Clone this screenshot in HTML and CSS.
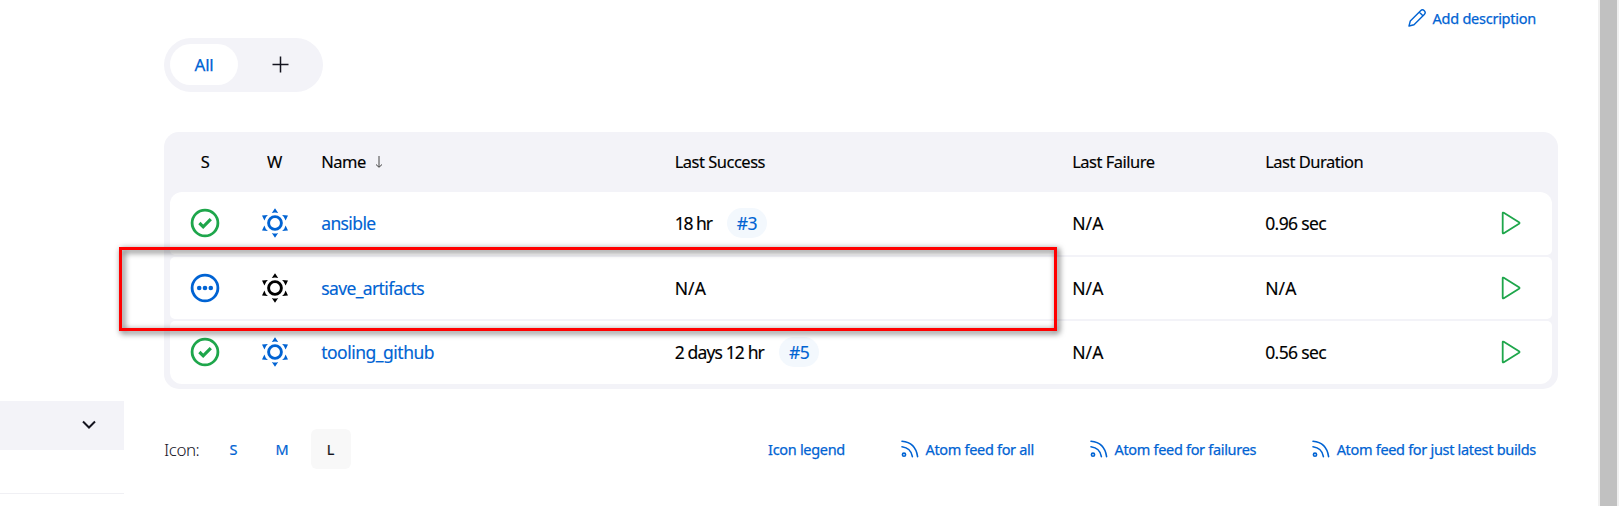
FILE: index.html
```html
<!DOCTYPE html>
<html lang="en">
<head>
<meta charset="utf-8">
<title>Dashboard</title>
<link rel="stylesheet" href="styles.css">
</head>
<body>
<svg class="defs" aria-hidden="true">
  <symbol id="ok" viewBox="0 0 30 30"><circle cx="15" cy="15" r="12.9" fill="none" stroke="currentColor" stroke-width="2.8"/><path d="M9.4 15l3.8 3.8 7.6-7.6" fill="none" stroke="currentColor" stroke-width="3.2"/></symbol>
  <symbol id="pending" viewBox="0 0 30 30"><circle cx="15" cy="15" r="12.9" fill="none" stroke="currentColor" stroke-width="2.8"/><g fill="currentColor"><circle cx="9.2" cy="15" r="2.3"/><circle cx="15" cy="15" r="2.3"/><circle cx="20.8" cy="15" r="2.3"/></g></symbol>
  <symbol id="sun" viewBox="0 0 30 30"><circle cx="15" cy="15" r="6.4" fill="none" stroke="currentColor" stroke-width="2.9"/><g fill="currentColor"><path d="M15 .2l3.2 4.8q-3.2-1.1-6.4 0z"/><path d="M15 29.8l3.2-4.8q-3.2 1.1-6.4 0z"/><path d="M2 7.4l5.9-.4q-2.7 2.2-3.5 5.6z"/><path d="M28 7.4l-5.9-.4q2.7 2.2 3.5 5.6z"/><path d="M2 22.6l5.9.4q-2.7-2.2-3.5-5.6z"/><path d="M28 22.6l-5.9.4q2.7-2.2 3.5-5.6z"/></g></symbol>
  <symbol id="play" viewBox="0 0 20 24"><path d="M1.7 2.4v19.2q0 1.2 1.1.7L18 12.8q1.1-.8 0-1.6L2.8 1.7q-1.1-.5-1.1.7z" fill="none" stroke="currentColor" stroke-width="1.8" stroke-linejoin="round"/></symbol>
  <symbol id="feed" viewBox="0 0 18 18"><g fill="none" stroke="currentColor" stroke-width="1.6" stroke-linecap="round"><circle cx="3" cy="14.7" r="1.6"/><path d="M1 6.8q9 1.2 10.4 9.8M1 1.3Q14.5 2.5 16.6 16.6"/></g></symbol>
</svg>
<div class="page">
  <aside class="side"><div class="side-head"><svg width="16" height="10" viewBox="0 0 16 10"><path d="M2 1.5l6 6 6-6" fill="none" stroke="#14141f" stroke-width="2"/></svg></div><div class="side-line"></div></aside>
  <main class="main">
    <div class="top"><a class="link add"><svg viewBox="0 0 18 18"><path d="M1 17l1.3-5L12.6 1.7a2.55 2.55 0 0 1 3.7 3.7L6 15.7zM11.2 3.1l3.7 3.7" fill="none" stroke="currentColor" stroke-width="1.4" stroke-linejoin="round"/></svg><span>Add description</span></a></div>
    <nav class="tabs"><a class="tab">All</a><a class="plus"><svg width="17" height="17" viewBox="0 0 17 17"><path d="M8.5.5v16M.5 8.5h16" stroke="#14141f" stroke-width="1.5"/></svg></a></nav>
    <section class="table">
      <div class="row head"><span class="c">S</span><span class="c">W</span><span>Name <svg class="arrow" viewBox="0 0 8 12"><path d="M4 0v11M1 8.5l3 2.8 3-2.8" fill="none" stroke="#444" stroke-width="1"/></svg></span><span>Last Success</span><span>Last Failure</span><span>Last Duration</span></div>
      <div class="row first"><span class="c green"><svg class="i"><use href="#ok"/></svg></span><span class="c blue"><svg class="i"><use href="#sun"/></svg></span><a class="blue">ansible</a><span class="hours">18 hr<b class="badge">#3</b></span><span class="na">N/A</span><span>0.96 sec</span><span class="green run"><svg><use href="#play"/></svg></span></div>
      <div class="row"><span class="c blue"><svg class="i"><use href="#pending"/></svg></span><span class="c"><svg class="i"><use href="#sun"/></svg></span><a class="blue">save_artifacts</a><span class="na">N/A</span><span class="na">N/A</span><span class="na">N/A</span><span class="green run"><svg><use href="#play"/></svg></span></div>
      <div class="row last"><span class="c green"><svg class="i"><use href="#ok"/></svg></span><span class="c blue"><svg class="i"><use href="#sun"/></svg></span><a class="blue wide">tooling_github</a><span class="days">2 days 12 hr<b class="badge">#5</b></span><span class="na">N/A</span><span>0.56 sec</span><span class="green run"><svg><use href="#play"/></svg></span></div>
    </section>
    <footer class="foot">
      <div class="sizes"><span class="lbl">Icon:</span><a>S</a><a>M</a><a class="on">L</a></div>
      <div class="feeds"><a class="link"><span>Icon legend</span></a><a class="link"><svg><use href="#feed"/></svg><span>Atom feed for all</span></a><a class="link"><svg><use href="#feed"/></svg><span>Atom feed for failures</span></a><a class="link"><svg><use href="#feed"/></svg><span>Atom feed for just latest builds</span></a></div>
    </footer>
  </main>
  <div class="scroll"></div>
</div>
<div class="mark"></div>
</body>
</html>
```
FILE: styles.css
```css
* { box-sizing: border-box; }
body { margin: 0; background: #fff; color: #14141f; font-family: "Noto Sans", sans-serif; overflow: hidden; }
.defs { position: absolute; width: 0; height: 0; }
.page { display: flex; height: 506px; }
.side { width: 124px; padding-top: 401px; flex: none; }
.side-head { height: 49px; background: #f3f3f8; display: flex; align-items: center; justify-content: flex-end; padding: 0 27px 1px 0; }
.side-line { margin-top: 43px; height: 1px; background: #f0f0f4; }
.main { width: 1394px; margin-left: 40px; flex: none; }
.scroll { width: 21px; margin-left: auto; background: #c1c1c1; border: solid #f0f0f0; border-width: 0 2px; }
.link { display: flex; align-items: center; color: #0063d3; font-size: 14.5px; line-height: 20px; white-space: nowrap; -webkit-text-stroke: .25px; }
.link span { letter-spacing: -.31px; }
.link.add span { letter-spacing: -.25px; }
.link svg { width: 18px; height: 18px; margin-right: 6.5px; flex: none; }
.top { height: 38px; padding: 8px 22px 0 0; display: flex; justify-content: flex-end; align-items: flex-start; }
.tabs { width: 159px; height: 54px; padding: 6px; border-radius: 27px; background: #f3f3f8; display: flex; }
.tab { flex: none; width: 68px; height: 41px; border-radius: 21px; background: #fff; color: #0063d3; font-size: 17px; line-height: 41px; text-align: center; letter-spacing: -.2px; -webkit-text-stroke: .25px; }
.plus { flex: none; width: 85px; height: 41px; display: grid; place-items: center; }
.table { margin-top: 40px; height: 257px; padding: 0 6px 5px; border-radius: 15px; background: #f3f3f8; display: flex; flex-direction: column; gap: 2px; }
.row { display: grid; grid-template-columns: 70px 69px 353.5px 397.5px 193px 248px 1fr; align-items: center; height: 62px; background: #fff; border-radius: 5px; color: #000; font-size: 17.5px; letter-spacing: -.62px; white-space: nowrap; -webkit-text-stroke: .15px; }
.row > * { padding-left: 12.2px; }
.row > .c { padding: 0; display: grid; place-items: center; }
.row > .run { padding: 0; }
.row > .na { letter-spacing: .1px; }
.row > .hours { letter-spacing: -1.1px; }
.row > .days { letter-spacing: -.86px; }
.row > .wide { letter-spacing: -.5px; }
.row.head { height: 60px; padding-bottom: 2px; margin-bottom: -2px; background: none; font-size: 16.5px; letter-spacing: -.5px; }
.row.first { height: 63px; padding-bottom: 1px; border-radius: 12px 12px 5px 5px; }
.row.last { height: 63px; padding-bottom: 1px; border-radius: 5px 5px 12px 12px; }
.i { width: 30px; height: 30px; }
.run svg { width: 20px; height: 24px; display: block; }
.arrow { width: 8px; height: 12px; margin-left: 5px; }
.green { color: #1ea64b; }
.row .blue { color: #0063d3; }
.badge { display: inline-block; height: 30px; line-height: 30px; border-radius: 15px; padding: 0 10px; margin-left: 15px; background: #f3f8fd; color: #0063d3; font-weight: 400; letter-spacing: -.5px; }
.foot { display: flex; justify-content: space-between; align-items: center; height: 40px; margin-top: 40px; padding-right: 22px; }
.sizes { display: flex; align-items: center; gap: 8.5px; font-size: 14.5px; }
.sizes a { width: 40px; height: 40px; line-height: 40px; border-radius: 6px; text-align: center; color: #0063d3; -webkit-text-stroke: .2px; }
.sizes .on { background: #f8f8f8; color: #14141f; }
.lbl { font-size: 17px; font-weight: 300; width: 41px; letter-spacing: -.5px; }
.feeds { display: flex; gap: 56px; }
.mark { position: absolute; left: 119px; top: 247px; width: 938px; height: 84px; border: 3px solid #f00; filter: drop-shadow(2px 2px 3px rgba(0,0,0,.75)); }
```
